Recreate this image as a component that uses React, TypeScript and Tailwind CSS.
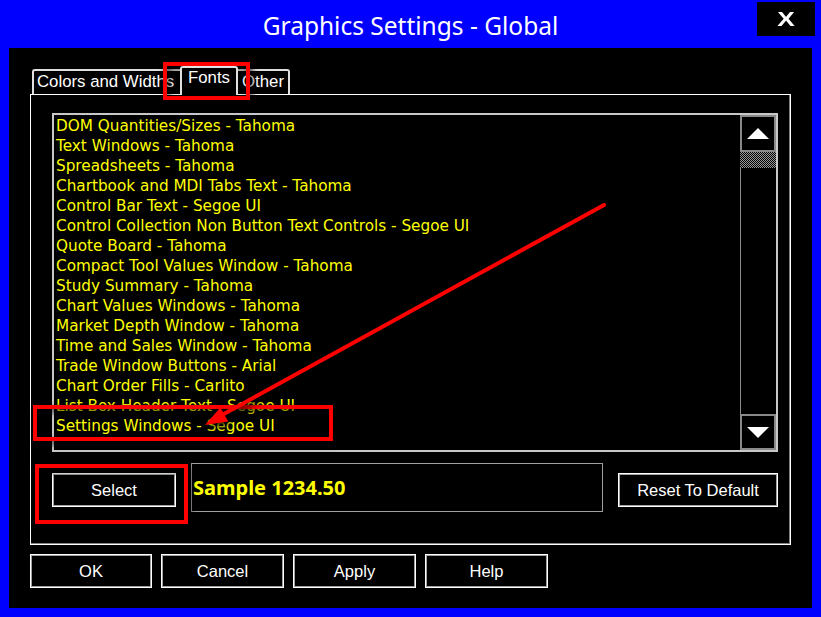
import React from 'react';

const fontItems = [
  'DOM Quantities/Sizes - Tahoma',
  'Text Windows - Tahoma',
  'Spreadsheets - Tahoma',
  'Chartbook and MDI Tabs Text - Tahoma',
  'Control Bar Text - Segoe UI',
  'Control Collection Non Button Text Controls - Segoe UI',
  'Quote Board - Tahoma',
  'Compact Tool Values Window - Tahoma',
  'Study Summary - Tahoma',
  'Chart Values Windows - Tahoma',
  'Market Depth Window - Tahoma',
  'Time and Sales Window - Tahoma',
  'Trade Window Buttons - Arial',
  'Chart Order Fills - Carlito',
  'List Box Header Text - Segoe UI',
  'Settings Windows - Segoe UI',
];

const WinButton = ({ label, className = '' }: { label: string; className?: string }) => (
  <button
    className={`h-[34px] bg-black border border-white shadow-[inset_0_0_0_1px_#a0a0a0] text-white text-[16.5px] font-['Liberation_Sans',Arial,sans-serif] flex items-center justify-center ${className}`}
  >
    {label}
  </button>
);

const Arrow = ({ up }: { up?: boolean }) => (
  <svg width="22" height="12" viewBox="0 0 22 12">
    {up ? <polygon points="11,0 22,11 0,11" fill="#fff" /> : <polygon points="0,1 22,1 11,12" fill="#fff" />}
  </svg>
);

export default function App() {
  return (
    <div className="relative w-[821px] h-[617px] bg-[#0000ff] flex flex-col overflow-hidden font-['Liberation_Sans',Arial,sans-serif]">
      {/* title bar */}
      <div className="h-[48px] flex items-center justify-center pt-[5px]">
        <span className="text-white text-[24.5px] font-['Noto_Sans',sans-serif]">Graphics Settings - Global</span>
      </div>
      <div className="absolute left-[757px] top-[2px] w-[58px] h-[34px] bg-black flex items-center justify-center">
        <span className="text-white text-[21px] font-bold scale-x-125">X</span>
      </div>

      <div className="flex-1 mx-[9px] mb-[9px] bg-black px-[21px] pt-[19px] flex flex-col">
        {/* tabs */}
        <div className="h-[27px] flex items-end pl-[2px] text-white text-[16.8px] leading-[20px]">
          <div className="w-[150px] h-[25px] border-2 border-r-0 border-b-0 border-[#e0e0e0] rounded-tl-[3px] pl-[3px] pt-[1px] whitespace-nowrap overflow-hidden">
            Colors and Widths
          </div>
          <div className="relative z-10 -ml-[2px] -mb-px w-[58px] h-[29px] bg-black border-2 border-b-0 border-[#e0e0e0] rounded-t-[3px] flex justify-center">
            Fonts
          </div>
          <div className="w-[52px] h-[25px] border-2 border-l-0 border-b-0 border-[#e0e0e0] rounded-tr-[3px] pl-[4px] pt-[1px]">
            Other
          </div>
        </div>

        {/* tab panel */}
        <div className="h-[451px] border border-white shadow-[inset_-1px_-1px_0_#808080] pl-[21px] pt-[18px]">
          <div className="w-[726px] h-[339px] border-2 border-[#c8c8c8] flex">
            <div className="flex-1 pl-[2px] pt-px text-[#ffff00] text-[15.25px] leading-[20px] font-['DejaVu_Sans',Verdana,sans-serif] whitespace-nowrap">
              {fontItems.map((item) => (
                <div key={item}>{item}</div>
              ))}
            </div>
            <div className="w-[36px] flex flex-col">
              <div className="h-[37px] border-2 border-[#8a8a8a] flex items-center justify-center">
                <Arrow up />
              </div>
              <div className="h-[16px] [background-image:repeating-conic-gradient(#9a9a9a_0_25%,#000_0_50%)] [background-size:2px_2px]" />
              <div className="flex-1 border-l border-[#8a8a8a]" />
              <div className="h-[36px] border-2 border-[#8a8a8a] flex items-center justify-center">
                <Arrow />
              </div>
            </div>
          </div>

          <div className="flex items-start mt-[11px]">
            <WinButton label="Select" className="w-[124px] mt-[10px]" />
            <div className="ml-[15px] w-[412px] h-[49px] border border-[#a0a0a0] flex items-center pl-px">
              <span className="text-[#ffff00] text-[20px] font-bold font-['Noto_Sans',sans-serif]">Sample 1234.50</span>
            </div>
            <WinButton label="Reset To Default" className="ml-[15px] w-[160px] mt-[10px]" />
          </div>
        </div>

        {/* dialog buttons */}
        <div className="mt-[9px] flex gap-[9px]">
          <WinButton label="OK" className="w-[122px]" />
          <WinButton label="Cancel" className="w-[123px]" />
          <WinButton label="Apply" className="w-[123px]" />
          <WinButton label="Help" className="w-[123px]" />
        </div>
      </div>

      {/* red annotations */}
      <div className="absolute left-[163px] top-[62px] w-[87px] h-[38px] border-4 border-[#ff0000] [filter:drop-shadow(2px_3px_3px_rgba(0,0,0,0.9))]" />
      <div className="absolute left-[33px] top-[405px] w-[300px] h-[36px] border-4 border-[#ff0000] [filter:drop-shadow(2px_3px_3px_rgba(0,0,0,0.9))]" />
      <div className="absolute left-[35px] top-[464px] w-[153px] h-[60px] border-4 border-[#ff0000] [filter:drop-shadow(2px_3px_3px_rgba(0,0,0,0.9))]" />
      <svg
        className="absolute left-0 top-0 pointer-events-none [filter:drop-shadow(2px_3px_3px_rgba(0,0,0,0.9))]"
        width="821"
        height="617"
      >
        <line x1="604" y1="205" x2="222" y2="415" stroke="#ff0000" strokeWidth="4" strokeLinecap="round" />
        <polygon points="205,425 220.4,407.4 228.2,421.4" fill="#ff0000" />
      </svg>
    </div>
  );
}
